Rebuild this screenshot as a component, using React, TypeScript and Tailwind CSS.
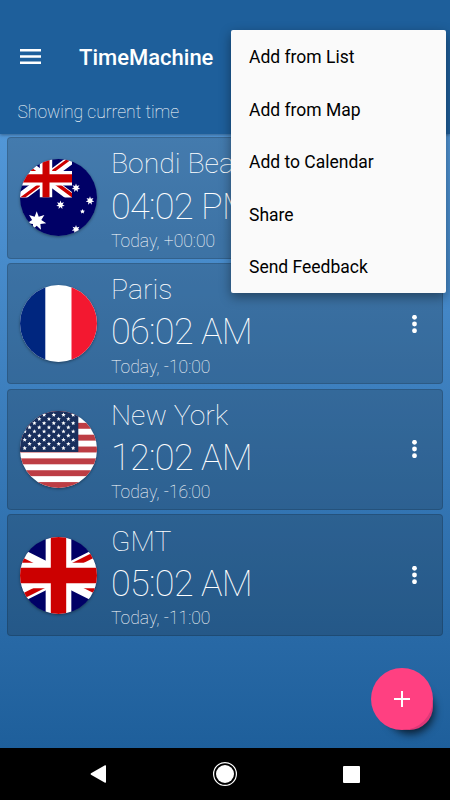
import type { ReactNode } from "react";

interface Clock {
  city: string;
  time: string;
  offset: string;
  flag: ReactNode;
}

const menuItems = ["Add from List", "Add from Map", "Add to Calendar", "Share", "Send Feedback"];

function starPoints(cx: number, cy: number, r: number, tips: number, inner: number) {
  const points: string[] = [];
  for (let i = 0; i < tips * 2; i++) {
    const radius = i % 2 === 0 ? r : r * inner;
    const angle = (Math.PI * i) / tips - Math.PI / 2;
    points.push(`${(cx + radius * Math.cos(angle)).toFixed(2)},${(cy + radius * Math.sin(angle)).toFixed(2)}`);
  }
  return points.join(" ");
}

function AustraliaFlag() {
  const stars = [
    [16.7, 62, 9.8, 7],
    [40.5, 46, 4.4, 7],
    [56, 29, 4.4, 7],
    [70, 41.7, 4.4, 7],
    [62.5, 52.5, 2.6, 5],
    [56, 70.5, 4.4, 7],
  ];
  return (
    <svg viewBox="0 0 77 77" className="size-full">
      <path fill="#006" d="M0 0h77v77H0z" />
      <svg x="0" y="0" width="52" height="38.5" viewBox="0 0 52 38.5">
        <path stroke="#fff" strokeWidth="9" d="M0 0l52 38.5M52 0L0 38.5" />
        <path fill="#c00" d="M0 0l26 19.25v3.8L0 3.8zM52 0L26 19.25v-3.8L47 0zM52 38.5L26 19.25h6L52 34zM0 38.5l26-19.25v3.8L5.2 38.5z" />
        <path fill="#fff" d="M19.8 0h12.4v38.5H19.8zM0 12h52v14.5H0z" />
        <path fill="#c00" d="M22.5 0h7v38.5h-7zM0 15.2h52v8.2H0z" />
      </svg>
      {stars.map(([x, y, r, tips]) => (
        <polygon key={`${x}-${y}`} fill="#fff" points={starPoints(x, y, r, tips, 0.48)} />
      ))}
    </svg>
  );
}

function FranceFlag() {
  return (
    <svg viewBox="0 0 77 77" className="size-full">
      <path fill="#fff" d="M0 0h77v77H0z" />
      <path fill="#00267f" d="M0 0h25.3v77H0z" />
      <path fill="#f31830" d="M51.5 0H77v77H51.5z" />
    </svg>
  );
}

function UsaFlag() {
  const stripe = 77 / 13;
  return (
    <svg viewBox="0 0 77 77" className="size-full">
      <path fill="#fff" d="M0 0h77v77H0z" />
      {[0, 2, 4, 6, 8, 10, 12].map((n) => (
        <rect key={n} y={n * stripe} width="77" height={stripe} fill="#bd3d44" />
      ))}
      <rect width="58.3" height={stripe * 7 - 0.5} fill="#192f5d" />
      {Array.from({ length: 9 }, (_, row) =>
        Array.from({ length: row % 2 === 0 ? 6 : 5 }, (_, col) => (
          <polygon
            key={`${row}-${col}`}
            fill="#fff"
            points={starPoints(4.7 + col * 9.7 + (row % 2) * 4.85, 3.9 + row * 4.15, 2.3, 5, 0.45)}
          />
        ))
      )}
    </svg>
  );
}

function BritainFlag() {
  return (
    <svg viewBox="15 0 30 30" className="size-full">
      <path fill="#006" d="M0 0h60v30H0z" />
      <path stroke="#fff" strokeWidth="6" d="M0 0l60 30M60 0L0 30" />
      <path fill="#c00" d="M0 0l30 15v2.24L0 2.24zM60 0L30 15v-2.24L60-2.24zM60 30L30 15v-2.24l30 15zM0 30l30-15v2.24L0 32.24z" />
      <path fill="#fff" d="M25 0h10v30H25zM0 10h60v10H0z" />
      <path fill="#c00" d="M27 0h6v30h-6zM0 12h60v6H0z" />
    </svg>
  );
}

const clocks: Clock[] = [
  { city: "Bondi Beach", time: "04:02 PM", offset: "Today, +00:00", flag: <AustraliaFlag /> },
  { city: "Paris", time: "06:02 AM", offset: "Today, -10:00", flag: <FranceFlag /> },
  { city: "New York", time: "12:02 AM", offset: "Today, -16:00", flag: <UsaFlag /> },
  { city: "GMT", time: "05:02 AM", offset: "Today, -11:00", flag: <BritainFlag /> },
];

function ClockCard({ clock }: { clock: Clock }) {
  return (
    <li className="flex h-[121.5px] rounded-[4px] border border-black/15 bg-[#1d262e]/25 pl-3 pr-[22px] text-white">
      <div className="mt-[21.3px] size-[77px] shrink-0 overflow-hidden rounded-full shadow-[0_1px_3px_rgba(0,0,0,0.4)]">
        {clock.flag}
      </div>
      <div className="ml-[14px] flex-1 whitespace-nowrap font-thin">
        <h2 className="mt-[9.3px] text-[28.4px] leading-[34px]">{clock.city}</h2>
        <p className="mt-[4.4px] text-[36px] leading-[43px] tracking-[-0.65px]">{clock.time}</p>
        <p className="mt-[2.2px] text-[17.5px] leading-[21px]">{clock.offset}</p>
      </div>
      <button aria-label="More" className="h-full w-[11px]">
        <svg viewBox="0 0 11 18" className="h-[18px] w-[11px]" fill="#fff">
          <circle cx="5.5" cy="2.3" r="2.4" />
          <circle cx="5.5" cy="9" r="2.4" />
          <circle cx="5.5" cy="15.7" r="2.4" />
        </svg>
      </button>
    </li>
  );
}

export default function App() {
  return (
    <div className="relative flex h-[800px] w-[450px] flex-col overflow-hidden bg-black font-['Roboto',sans-serif]">
      <header className="z-10 h-[134px] shrink-0 bg-[#1e5f9b] text-white shadow-[0_1px_3px_rgba(0,0,0,0.35)]">
        <div className="flex items-center pl-5 pt-[42px]">
          <svg viewBox="0 0 21 15" className="-mt-[3px] h-[15px] w-[21px]" fill="#fff">
            <path d="M0 0h21v2.5H0zM0 6.2h21v2.5H0zM0 12.4h21v2.5H0z" />
          </svg>
          <h1 className="ml-[38px] text-[22px] font-medium leading-8">TimeMachine</h1>
        </div>
        <p className="pl-[17.5px] pt-[27px] text-[17.5px] font-thin leading-[22px]">Showing current time</p>
      </header>

      <main className="h-[614px] shrink-0 bg-linear-to-b from-[#5297d8] to-[#1e5f9b] px-[7px] pt-[3px]">
        <ul className="flex flex-col gap-[4.3px]">
          {clocks.map((clock) => (
            <ClockCard key={clock.city} clock={clock} />
          ))}
        </ul>
      </main>

      <nav className="flex h-[52px] items-center justify-between bg-black pl-[90px] pr-[90px]">
        <svg viewBox="0 0 16 18" className="h-[18px] w-4" fill="#fff">
          <path d="M15 0.3Q16 0 16 1v16Q16 18 15 17.7L1 9.8Q0 9 1 8.2z" />
        </svg>
        <svg viewBox="0 0 24 24" className="size-6">
          <circle cx="12" cy="12" r="11.4" fill="none" stroke="#fff" strokeWidth="1.2" />
          <circle cx="12" cy="12" r="9" fill="#fff" />
        </svg>
        <div className="size-[17px] rounded-[1px] bg-white" />
      </nav>

      <button aria-label="Add clock" className="absolute left-[371px] top-[668px] size-[62px]">
        <span className="absolute bottom-0 right-0 size-[47px] rounded-full bg-[#dd3878] shadow-[1px_4px_9px_rgba(0,0,0,0.7)]" />
        <span className="relative flex size-full items-center justify-center rounded-full bg-[#ff4081]">
          <svg viewBox="0 0 16 16" className="size-4" fill="#fff">
            <path d="M7 0h2v7h7v2H9v7H7V9H0V7h7z" />
          </svg>
        </span>
      </button>

      <ul className="absolute left-[231px] top-[30px] z-20 h-[263px] w-[215px] rounded-[2px] bg-[#fafafa] pt-[1px] text-[17.5px] text-black shadow-[0_4px_12px_rgba(0,0,0,0.4)]">
        {menuItems.map((item) => (
          <li key={item} className="flex h-[52.5px] items-center pl-[18px]">
            {item}
          </li>
        ))}
      </ul>
    </div>
  );
}
